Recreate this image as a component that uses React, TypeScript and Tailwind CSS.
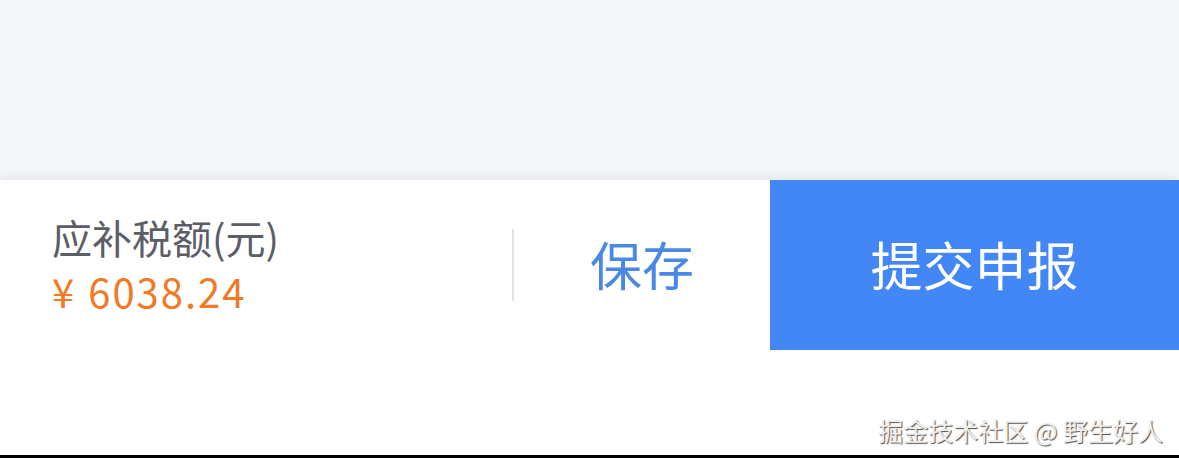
export default function App() {
  const cjk = { fontFamily: '"Noto Sans CJK SC", "Noto Sans", sans-serif' };
  return (
    <div className="w-[1179px] h-[458px] flex flex-col bg-[#f5f6fa] overflow-hidden" style={cjk}>
      <div className="h-[180px] shrink-0" />
      <div className="flex-1 flex flex-col bg-white shadow-[0_-3px_10px_rgba(0,0,0,0.07)]">
        <div className="flex h-[170px] shrink-0">
          <div className="w-[512px] flex flex-col justify-center pl-[52px] pb-[2px]">
            <div className="text-[40px] leading-[48px] text-[#5b5e66]">应补税额(元)</div>
            <div className="text-[40px] leading-[50px] text-[#f07a26] mt-[5px] tracking-[2px]">
              ¥<span className="ml-[12px]">6038.24</span>
            </div>
          </div>
          <div className="flex items-center">
            <div className="w-[2px] h-[72px] bg-[#e3e4e8]" />
          </div>
          <div className="w-[256px] flex items-center justify-center text-[52px] text-[#4a88e6] pb-[2px]">
            保存
          </div>
          <div className="flex-1 bg-[#4386f5] flex items-center justify-center text-[52px] text-white pb-[2px]">
            提交申报
          </div>
        </div>
        <div className="flex-1 flex items-end justify-end pr-[16px] pb-[10px]">
          <div className="text-[25px] leading-[30px] text-[#efefef] [text-shadow:1px_1px_1px_rgba(0,0,0,0.7)]">
            掘金技术社区 @ 野生好人
          </div>
        </div>
      </div>
      <div className="h-[3px] bg-black shrink-0" />
    </div>
  );
}
